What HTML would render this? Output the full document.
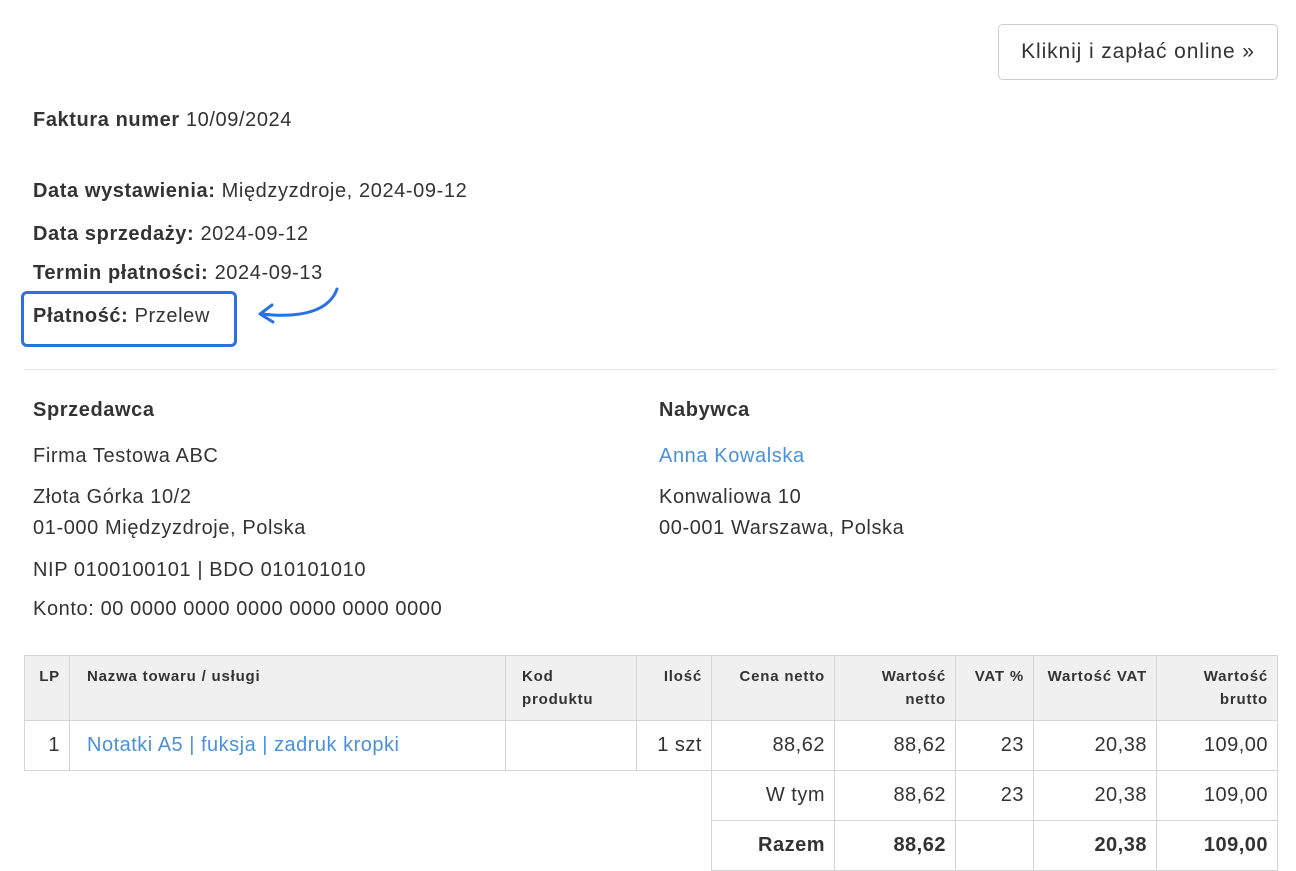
<!DOCTYPE html>
<html><head><meta charset="utf-8"><style>
*{margin:0;padding:0;box-sizing:border-box}
body{width:1296px;height:868px;background:#fff;font-family:"Liberation Sans",Arial,sans-serif;color:#333;position:relative;overflow:hidden}
.t{position:absolute;font-size:20px;line-height:24px;white-space:nowrap;letter-spacing:0.6px}
b{font-weight:bold}
.a{color:#4a90d9}
.btn{position:absolute;left:998px;top:24px;width:280px;height:56px;border:1px solid #ccc;border-radius:5px;font-size:21px;line-height:54px;text-align:center;color:#333;letter-spacing:0.9px}
.hr{position:absolute;left:24px;top:369px;width:1253px;height:1px;background:#e8e8e8}
.box{position:absolute;left:21px;top:291px;width:216px;height:56px;border:3px solid #2a72e0;border-radius:6px}
table{position:absolute;left:24px;top:655px;border-collapse:collapse;font-size:20px;color:#333;letter-spacing:0.5px}
td,th{border:1px solid #d5d5d5;padding:0 9px;text-align:right;vertical-align:top}
th{background:#f0f0f0;font-size:15px;font-weight:bold;line-height:23px;padding-top:9px;height:65px;letter-spacing:0.8px}
td{height:50px;line-height:48px}
td.n{border:none}
</style></head><body>
<div class="btn">Kliknij i zapłać online »</div>
<div class="t" style="left:33px;top:108px"><b>Faktura numer</b> 10/09/2024</div>
<div class="t" style="left:33px;top:179px"><b>Data wystawienia:</b> Międzyzdroje, 2024-09-12</div>
<div class="t" style="left:33px;top:222px"><b>Data sprzedaży:</b> 2024-09-12</div>
<div class="t" style="left:33px;top:261px"><b>Termin płatności:</b> 2024-09-13</div>
<div class="t" style="left:33px;top:304px"><b>Płatność:</b> Przelew</div>
<div class="box"></div>
<svg style="position:absolute;left:250px;top:284px" width="95" height="45" viewBox="0 0 95 45"><path d="M87 5 C80 25 55 35 12 30" fill="none" stroke="#2a72e0" stroke-width="3" stroke-linecap="round"/><path d="M22 21 L10 30 L23 38" fill="none" stroke="#2a72e0" stroke-width="3" stroke-linecap="round" stroke-linejoin="round"/></svg>
<div class="hr"></div>
<div class="t" style="left:33px;top:398px"><b>Sprzedawca</b></div>
<div class="t" style="left:33px;top:444px">Firma Testowa ABC</div>
<div class="t" style="left:33px;top:485px">Złota Górka 10/2</div>
<div class="t" style="left:33px;top:516px">01-000 Międzyzdroje, Polska</div>
<div class="t" style="left:33px;top:558px">NIP 0100100101 | BDO 010101010</div>
<div class="t" style="left:33px;top:597px">Konto: 00 0000 0000 0000 0000 0000 0000</div>
<div class="t" style="left:659px;top:398px"><b>Nabywca</b></div>
<div class="t a" style="left:659px;top:444px">Anna Kowalska</div>
<div class="t" style="left:659px;top:485px">Konwaliowa 10</div>
<div class="t" style="left:659px;top:516px">00-001 Warszawa, Polska</div>
<table>
<tr><th style="width:45px">LP</th><th style="width:436px;text-align:left;padding-left:17px">Nazwa towaru / usługi</th><th style="width:131px;text-align:left;padding-left:16px">Kod<br>produktu</th><th style="width:75px">Ilość</th><th style="width:123px">Cena netto</th><th style="width:121px">Wartość<br>netto</th><th style="width:78px">VAT %</th><th style="width:123px">Wartość VAT</th><th style="width:121px">Wartość<br>brutto</th></tr>
<tr><td>1</td><td class="a" style="text-align:left;padding-left:17px">Notatki A5 | fuksja | zadruk kropki</td><td></td><td>1 szt</td><td>88,62</td><td>88,62</td><td>23</td><td>20,38</td><td>109,00</td></tr>
<tr><td class="n"></td><td class="n"></td><td class="n"></td><td class="n"></td><td>W tym</td><td>88,62</td><td>23</td><td>20,38</td><td>109,00</td></tr>
<tr><td class="n"></td><td class="n"></td><td class="n"></td><td class="n"></td><td><b>Razem</b></td><td><b>88,62</b></td><td></td><td><b>20,38</b></td><td><b>109,00</b></td></tr>
</table>
</body></html>
